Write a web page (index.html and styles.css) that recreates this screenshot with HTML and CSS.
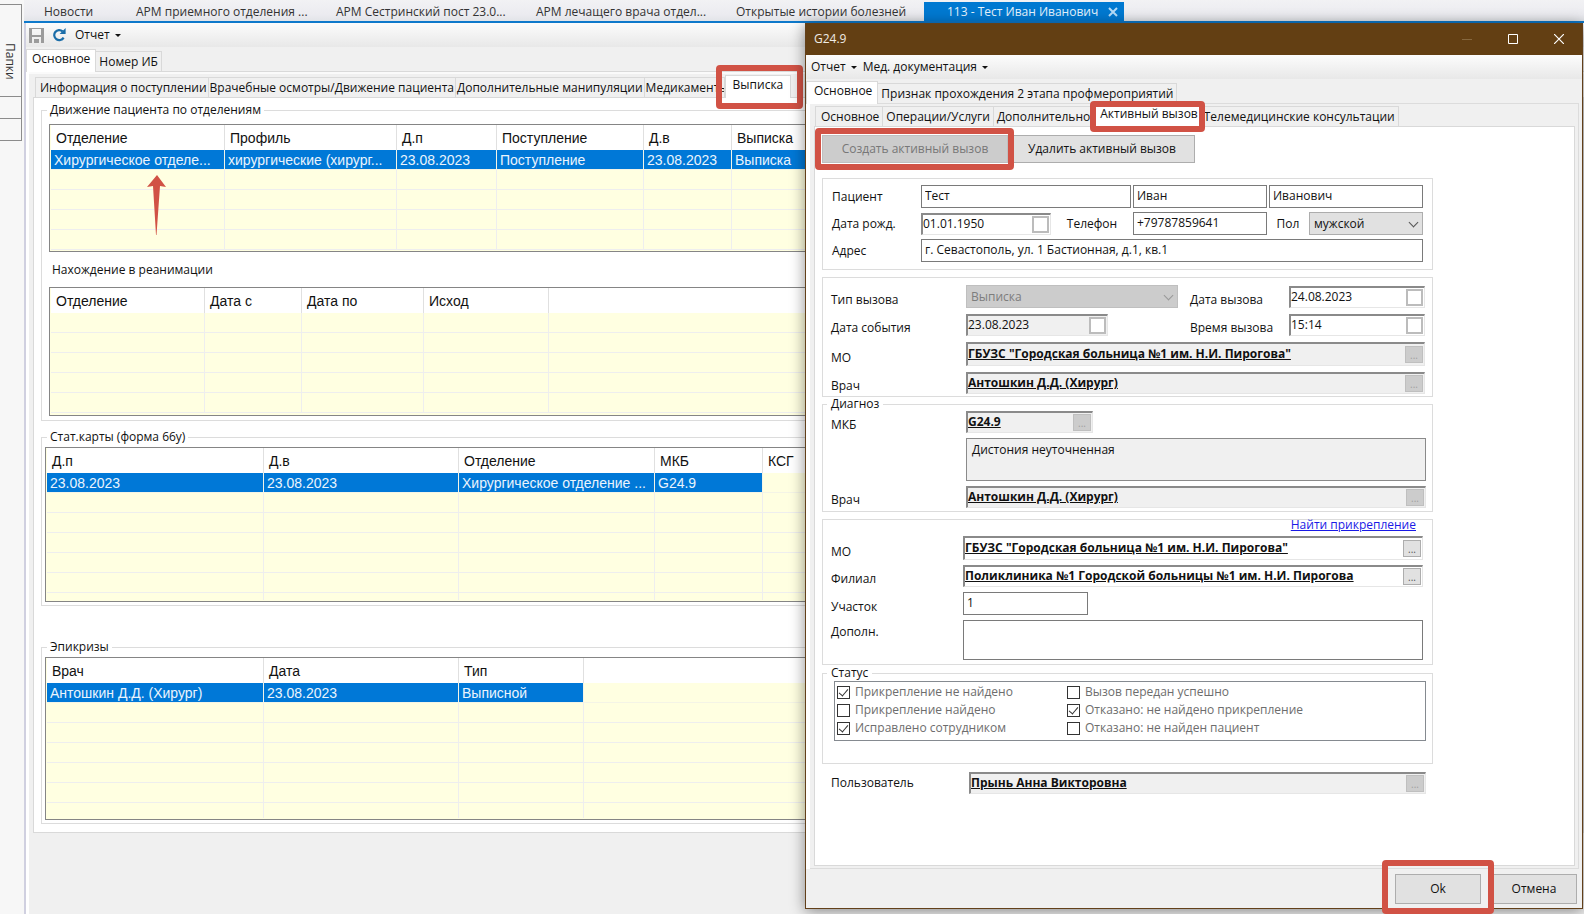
FILE: index.html
```html
<!DOCTYPE html>
<html lang="ru">
<head>
<meta charset="utf-8">
<title>113 - Тест Иван Иванович</title>
<link rel="stylesheet" href="styles.css">
</head>
<body>
<div class="app">
  <aside class="dock">
    <div class="dock-box">
      <button class="dock-folders" type="button">Папки</button>
      <div class="dock-slot"></div>
      <div class="dock-slot"></div>
    </div>
  </aside>

  <div class="workspace">
    <nav class="doc-tabs">
      <button type="button" class="doc-tab doc-tab-short">Новости</button>
      <button type="button" class="doc-tab">АРМ приемного отделения ...</button>
      <button type="button" class="doc-tab">АРМ Сестринский пост 23.0...</button>
      <button type="button" class="doc-tab">АРМ лечащего врача отдел...</button>
      <button type="button" class="doc-tab">Открытые истории болезней</button>
      <button type="button" class="doc-tab doc-tab-active">113 - Тест Иван Иванович
        <svg width="10" height="10" viewBox="0 0 10 10"><path d="M1 1l8 8M9 1l-8 8" stroke="#b5dcf8" stroke-width="2"/></svg>
      </button>
    </nav>

    <div class="toolbar">
      <button type="button" class="tool" aria-label="Сохранить">
        <svg width="15" height="15" viewBox="0 0 15 15"><path fill="#9b9b9b" fill-rule="evenodd" d="M0 0h15v15h-15zM3 1v6h9v-6zM3 9v6h2v-4h5v4h2v-6z"/><path fill="#9b9b9b" d="M6 11h2v3h-2z"/></svg>
      </button>
      <button type="button" class="tool" aria-label="Обновить">
        <svg width="13" height="14" viewBox="0 0 13 14"><path d="M10.6 9.6A5 5 0 1 1 9.6 3.4" fill="none" stroke="#1b6da8" stroke-width="2.2"/><path d="M12.6 0v6h-6z" fill="#1b6da8"/></svg>
      </button>
      <button type="button" class="menu">Отчет<span class="caret"></span></button>
    </div>

    <div class="tabs tabs-outer">
      <button type="button" class="tab tab-active">Основное</button>
      <button type="button" class="tab">Номер ИБ</button>
    </div>
    <div class="outer-page">
      <div class="tabs tabs-inner">
        <button type="button" class="tab">Информация о поступлении</button>
        <button type="button" class="tab">Врачебные осмотры/Движение пациента</button>
        <button type="button" class="tab">Дополнительные манипуляции</button>
        <button type="button" class="tab tab-cut">Медикаменты</button>
        <button type="button" class="tab tab-active marked mark-tab">Выписка</button>
      </div>
      <main class="card">
        <fieldset class="group group-moves">
          <legend>Движение пациента по отделениям</legend>
          <div class="grid grid-moves">
            <table>
              <colgroup><col><col><col><col><col><col></colgroup>
              <thead><tr><th>Отделение</th><th>Профиль</th><th>Д.п</th><th>Поступление</th><th>Д.в</th><th>Выписка</th></tr></thead>
              <tbody>
                <tr class="selected"><td>Хирургическое отделе...</td><td>хирургические (хирург...</td><td>23.08.2023</td><td>Поступление</td><td>23.08.2023</td><td>Выписка</td></tr>
                <tr><td></td><td></td><td></td><td></td><td></td><td></td></tr>
                <tr><td></td><td></td><td></td><td></td><td></td><td></td></tr>
                <tr><td></td><td></td><td></td><td></td><td></td><td></td></tr>
                <tr><td></td><td></td><td></td><td></td><td></td><td></td></tr>
              </tbody>
            </table>
            <svg class="arrow" width="20" height="60" viewBox="0 0 20 60"><path d="M10 0L19 12L13 11L9.500 60L9 60L6 11L0 12z" fill="#d15245"/></svg>
          </div>
          <p class="caption">Нахождение в реанимации</p>
          <div class="grid grid-icu">
            <table>
              <colgroup><col><col><col><col><col></colgroup>
              <thead><tr><th>Отделение</th><th>Дата с</th><th>Дата по</th><th>Исход</th><th></th></tr></thead>
              <tbody>
                <tr><td></td><td></td><td></td><td></td><td></td></tr>
                <tr><td></td><td></td><td></td><td></td><td></td></tr>
                <tr><td></td><td></td><td></td><td></td><td></td></tr>
                <tr><td></td><td></td><td></td><td></td><td></td></tr>
                <tr><td></td><td></td><td></td><td></td><td></td></tr>
              </tbody>
            </table>
          </div>
        </fieldset>

        <fieldset class="group group-stat">
          <legend>Стат.карты (форма 66у)</legend>
          <div class="grid grid-stat">
            <table>
              <colgroup><col><col><col><col><col></colgroup>
              <thead><tr><th>Д.п</th><th>Д.в</th><th>Отделение</th><th>МКБ</th><th>КСГ</th></tr></thead>
              <tbody>
                <tr class="selected"><td>23.08.2023</td><td>23.08.2023</td><td>Хирургическое отделение ...</td><td>G24.9</td><td class="blank"></td></tr>
                <tr><td></td><td></td><td></td><td></td><td></td></tr>
                <tr><td></td><td></td><td></td><td></td><td></td></tr>
                <tr><td></td><td></td><td></td><td></td><td></td></tr>
                <tr><td></td><td></td><td></td><td></td><td></td></tr>
                <tr><td></td><td></td><td></td><td></td><td></td></tr>
                <tr class="part-sm"><td></td><td></td><td></td><td></td><td></td></tr>
              </tbody>
            </table>
          </div>
        </fieldset>

        <fieldset class="group group-epic">
          <legend>Эпикризы</legend>
          <div class="grid grid-epic">
            <table>
              <colgroup><col><col><col><col></colgroup>
              <thead><tr><th>Врач</th><th>Дата</th><th>Тип</th><th></th></tr></thead>
              <tbody>
                <tr class="selected"><td>Антошкин Д.Д. (Хирург)</td><td>23.08.2023</td><td>Выписной</td><td class="blank"></td></tr>
                <tr><td></td><td></td><td></td><td></td></tr>
                <tr><td></td><td></td><td></td><td></td></tr>
                <tr><td></td><td></td><td></td><td></td></tr>
                <tr><td></td><td></td><td></td><td></td></tr>
                <tr><td></td><td></td><td></td><td></td></tr>
                <tr class="part-lg"><td></td><td></td><td></td><td></td></tr>
              </tbody>
            </table>
          </div>
        </fieldset>
      </main>
    </div>
  </div>

  <section class="dialog" role="dialog" aria-labelledby="dlg-title">
    <header class="titlebar">
      <h1 id="dlg-title">G24.9</h1>
      <button type="button" class="winbtn" aria-label="Свернуть"><svg width="10" height="10" viewBox="0 0 10 10"><path d="M0 5.500h10" stroke="#86683f"/></svg></button>
      <button type="button" class="winbtn" aria-label="Развернуть"><svg width="10" height="10" viewBox="0 0 10 10"><path d="M.5.5h9v9h-9z" fill="none" stroke="#fff"/></svg></button>
      <button type="button" class="winbtn" aria-label="Закрыть"><svg width="10" height="10" viewBox="0 0 10 10"><path d="M0 0l10 10M10 0l-10 10" stroke="#fff" stroke-width="1.200"/></svg></button>
    </header>
    <div class="menubar">
      <button type="button" class="menu">Отчет<span class="caret"></span></button>
      <button type="button" class="menu">Мед. документация<span class="caret"></span></button>
    </div>
    <div class="tabs tabs-outer tabs-dialog">
      <button type="button" class="tab tab-active">Основное</button>
      <button type="button" class="tab">Признак прохождения 2 этапа профмероприятий</button>
    </div>
    <div class="dialog-page">
      <div class="tabs tabs-call">
        <button type="button" class="tab">Основное</button>
        <button type="button" class="tab">Операции/Услуги</button>
        <button type="button" class="tab">Дополнительно</button>
        <button type="button" class="tab tab-active marked mark-call">Активный вызов</button>
        <button type="button" class="tab">Телемедицинские консультации</button>
      </div>
      <form class="sheet">
        <div class="actions">
          <span class="marked mark-create"><button type="button" class="btn" disabled>Создать активный вызов</button></span>
          <button type="button" class="btn">Удалить активный вызов</button>
        </div>

        <div class="panel patient">
          <label for="p-last">Пациент</label>
          <div class="names">
            <input class="text" id="p-last" value="Тест">
            <input class="text" aria-label="Имя" value="Иван">
            <input class="text" aria-label="Отчество" value="Иванович">
          </div>
          <label for="p-birth">Дата рожд.</label>
          <div class="birth-row">
            <div class="pick"><input id="p-birth" value="01.01.1950"><button type="button" class="cal" aria-label="Календарь"></button></div>
            <label for="p-phone">Телефон</label>
            <input class="text" id="p-phone" value="+79787859641">
            <label for="p-sex">Пол</label>
            <div class="drop"><select id="p-sex"><option>мужской</option></select></div>
          </div>
          <label for="p-addr">Адрес</label>
          <input class="text" id="p-addr" value="г. Севастополь, ул. 1 Бастионная, д.1, кв.1">
        </div>

        <div class="panel form call">
          <label for="c-type">Тип вызова</label>
          <div class="pair">
            <div class="drop drop-off"><select id="c-type" disabled><option>Выписка</option></select></div>
            <label for="c-date">Дата вызова</label>
            <div class="pick"><input id="c-date" value="24.08.2023"><button type="button" class="cal" aria-label="Календарь"></button></div>
          </div>
          <label for="c-event">Дата события</label>
          <div class="pair">
            <div class="pick pick-off pick-date"><input id="c-event" value="23.08.2023" readonly><button type="button" class="cal" aria-label="Календарь"></button></div>
            <label for="c-time">Время вызова</label>
            <div class="pick"><input id="c-time" value="15:14"><button type="button" class="cal" aria-label="Время"></button></div>
          </div>
          <label for="c-mo">МО</label>
          <div class="pick pick-off pick-tall ref"><input id="c-mo" value='ГБУЗС "Городская больница №1 им. Н.И. Пирогова"' readonly><button type="button" class="more" disabled>...</button></div>
          <label for="c-doc">Врач</label>
          <div class="pick pick-off ref"><input id="c-doc" value="Антошкин Д.Д. (Хирург)" readonly><button type="button" class="more" disabled>...</button></div>
        </div>

        <fieldset class="panel diag">
          <legend>Диагноз</legend>
          <div class="fields">
            <label for="d-mkb">МКБ</label>
            <div class="pick pick-off pick-code ref"><input id="d-mkb" value="G24.9" readonly><button type="button" class="more" disabled>...</button></div>
            <textarea class="text area area-off" aria-label="Расшифровка диагноза" readonly>Дистония неуточненная</textarea>
            <label for="d-doc">Врач</label>
            <div class="pick pick-off ref"><input id="d-doc" value="Антошкин Д.Д. (Хирург)" readonly><button type="button" class="more" disabled>...</button></div>
          </div>
        </fieldset>

        <div class="panel form attach">
          <a class="find" href="#">Найти прикрепление</a>
          <label for="a-mo">МО</label>
          <div class="pick pick-tall ref"><input id="a-mo" value='ГБУЗС "Городская больница №1 им. Н.И. Пирогова"'><button type="button" class="more">...</button></div>
          <label for="a-fil">Филиал</label>
          <div class="pick ref"><input id="a-fil" value="Поликлиника №1 Городской больницы №1 им. Н.И. Пирогова"><button type="button" class="more">...</button></div>
          <label for="a-uch">Участок</label>
          <input class="text text-short" id="a-uch" value="1">
          <label for="a-dop">Дополн.</label>
          <textarea class="text area" id="a-dop"></textarea>
        </div>

        <fieldset class="panel status">
          <legend>Статус</legend>
          <div class="checks">
            <label><input type="checkbox" checked disabled>Прикрепление не найдено</label>
            <label><input type="checkbox" disabled>Вызов передан успешно</label>
            <label><input type="checkbox" disabled>Прикрепление найдено</label>
            <label><input type="checkbox" checked disabled>Отказано: не найдено прикрепление</label>
            <label><input type="checkbox" checked disabled>Исправлено сотрудником</label>
            <label><input type="checkbox" disabled>Отказано: не найден пациент</label>
          </div>
        </fieldset>

        <div class="user">
          <label for="u-name">Пользователь</label>
          <div class="pick pick-off ref"><input id="u-name" value="Прынь Анна Викторовна" readonly><button type="button" class="more" disabled>...</button></div>
        </div>
      </form>
    </div>
    <footer class="footer">
      <span class="marked mark-ok"><button type="button" class="btn">Ok</button></span>
      <button type="button" class="btn">Отмена</button>
    </footer>
  </section>
</div>
</body>
</html>
```
FILE: styles.css
```css
* { box-sizing: border-box; }

body, button, input, select, textarea {
  font: 12px/16px "Open Sans", "Noto Sans", sans-serif;
  color: #111;
}

body { margin: 0; background: #f0f0f0; }

button { margin: 0; padding: 0; border: 0; background: none; white-space: nowrap; }
input, textarea, select { margin: 0; min-width: 0; }
fieldset { margin: 0; padding: 0; min-width: 0; }
svg { display: block; }

.app {
  position: relative;
  display: flex;
  height: 100vh;
  overflow: hidden;
}

/* left dock */
.dock { flex: none; width: 24px; padding-top: 4px; background: #f7f7f7; }
.dock-box { width: 22px; border: solid #8c8c8c; border-width: 1px 1px 0 0; }
.dock-folders {
  display: block;
  width: 20px;
  height: 91px;
  padding-top: 38px;
  writing-mode: vertical-rl;
  color: #333;
  text-align: start;
}
.dock-slot { height: 22px; border-top: 1px solid #8c8c8c; }
.dock-slot:last-child { height: 23px; border-bottom: 1px solid #8c8c8c; }

/* workspace */
.workspace {
  flex: 1;
  min-width: 0;
  border-left: 2px solid #d0d0e0;
}
.doc-tabs {
  display: flex;
  align-items: flex-end;
  height: 23px;
  margin-left: -2px;
  padding-left: 8px;
  border-bottom: 2px solid #0e79cb;
  background: linear-gradient(#f2f2f4, #ebebf0 70%, #e2e4e8);
}
.doc-tab { flex: 0 1 200px; height: 19px; padding: 0 12px; text-align: left; color: #333; }
.doc-tab-short { flex-basis: 92px; }
.doc-tab-active {
  display: flex;
  align-items: center;
  justify-content: space-between;
  padding: 0 6px 0 23px;
  background: #0079d1;
  color: #e6f3fc;
}

.toolbar, .menubar {
  display: flex;
  align-items: center;
  height: 24px;
  gap: 9px;
  background: linear-gradient(#fcfcfc, #e8e8e8);
}
.toolbar { padding-left: 3px; }
.menubar { gap: 6px; padding-left: 5px; }
.menu { display: flex; align-items: center; gap: 5px; }
.caret { border: solid transparent; border-width: 3px 3px 0; border-top-color: #111; }

/* tab strips */
.tabs { display: flex; align-items: flex-end; }
.tabs-outer { height: 24px; }
.tab {
  height: 20px;
  padding: 0 3px;
  border: solid #d9d9d9;
  border-width: 1px 1px 0 0;
  background: #f0f0f0;
}
.tab:first-child { border-left-width: 1px; }
.tab-active {
  position: relative;
  z-index: 1;
  height: 23px;
  margin-bottom: -1px;
  padding: 0 5px 4px;
  border: 1px solid #d9d9d9;
  border-bottom: 0;
  background: #fff;
}
.tabs-inner .tab { padding: 0 1px; }
.tabs-inner .tab-active { padding: 0 7px 4px; }
.tabs-inner .tab:first-child { padding-left: 4px; }
.tabs-inner .tab-cut { width: 80px; overflow: hidden; text-align: left; }

.outer-page {
  margin-left: 3px;
  padding: 3px 0 0 4px;
  border-top: 1px solid #d9d9d9;
  box-shadow: inset 0 2px #fafafa, -3px 0 #fff;
  height: calc(100vh - 71px);
}
.outer-page > .tabs { padding-left: 2px; }
.card {
  padding: 4px 0 8px 7px;
  border: 1px solid #d9d9d9;
  background: #fff;
}

.group { border: 1px solid #dcdcdc; }
.group legend { height: 16px; margin-left: 5px; padding: 0 3px; }
.group-moves { padding: 6px 0 4px; }
.group-moves .grid { margin: 0 7px; }
.group-stat { margin-top: 8px; padding: 2px 0 3px; }
.group-epic { margin-top: 33px; padding: 2px 0 3px; }
.group-stat .grid, .group-epic .grid { margin: 0 3px; }
.caption { margin: 0; padding: 10px 10px 9px; }

/* data grids */
.grid {
  position: relative;
  padding: 0 0 1px 1px;
  border: 1px solid #858585;
  background: #ffffe1;
}
.grid table {
  width: 100%;
  table-layout: fixed;
  border-collapse: separate;
  border-spacing: 0;
  font: 14px/18px "Liberation Sans", Arial, sans-serif;
}
.grid th {
  height: 25px;
  padding: 0 5px;
  border-right: 1px solid #e0e0e0;
  background: #fff;
  font-weight: normal;
  text-align: left;
}
.grid td {
  height: 20px;
  padding: 0 3px;
  border: solid #eeeeee;
  border-width: 0 1px 1px 0;
  white-space: nowrap;
  overflow: hidden;
}
.grid .selected td {
  border-color: #f4f4e6;
  background: #0078d7;
  background-clip: padding-box;
  color: #eaf4fd;
}
.grid .selected .blank { background: none; }
.grid .part-sm td { height: 7px; border-bottom: 0; }
.grid .part-lg td { height: 15px; border-bottom: 0; }

.grid-icu { padding-bottom: 2px; }

.grid-moves col:nth-child(1) { width: 174px; }
.grid-moves col:nth-child(2) { width: 172px; }
.grid-moves col:nth-child(3) { width: 100px; }
.grid-moves col:nth-child(4) { width: 147px; }
.grid-moves col:nth-child(5) { width: 88px; }
.grid-icu col:nth-child(1) { width: 154px; }
.grid-icu col:nth-child(2) { width: 97px; }
.grid-icu col:nth-child(3) { width: 122px; }
.grid-icu col:nth-child(4) { width: 125px; }
.grid-stat col:nth-child(1), .grid-epic col:nth-child(1) { width: 217px; }
.grid-stat col:nth-child(2), .grid-epic col:nth-child(2) { width: 195px; }
.grid-stat col:nth-child(3) { width: 196px; }
.grid-stat col:nth-child(4) { width: 108px; }
.grid-epic col:nth-child(3) { width: 125px; }

/* highlight marks */
.marked { position: relative; }
.marked::after {
  content: "";
  position: absolute;
  z-index: 2;
  border: 6px solid #d15245;
  border-radius: 4px;
  pointer-events: none;
}
.mark-tab::after { inset: -11px -13px -11px -10px; }
.tabs-call .mark-call { padding: 0 2px 4px 5px; }
.mark-call::after { inset: -4px -5px -5px; }
.mark-create::after { inset: -7px -6px -7px -7px; }
.mark-ok::after { inset: -14px -13px -10px; }
.arrow { position: absolute; left: 97px; top: 50px; }

/* dialog window */
.dialog {
  position: absolute;
  z-index: 3;
  top: 23px;
  right: 1px;
  bottom: 5px;
  left: 805px;
  display: flex;
  flex-direction: column;
  border: 1px solid #63401a;
  background: #f0f0f0;
  box-shadow: 0 2px 14px rgba(0, 0, 0, .45);
}
.titlebar {
  display: flex;
  align-items: center;
  height: 31px;
  padding: 0 0 1px 8px;
  background: #633f13;
}
.titlebar h1 { flex: 1; margin: 0; font: inherit; color: #f0ebe4; }
.winbtn { display: grid; place-items: center; width: 46px; height: 30px; }
.tabs-dialog .tab { padding: 0 3px; }
.tabs-dialog .tab-active { padding: 0 5px 4px 7px; }
.dialog-page {
  flex: 1;
  display: flex;
  flex-direction: column;
  min-height: 0;
  margin: 0 3px 0 4px;
  padding: 0 3px 2px 4px;
  border: 1px solid #dcdcdc;
  border-left: 0;
  box-shadow: -4px 0 #fff;
}
.tabs-call { padding-left: 1px; }
.tabs-call .tab:first-child { padding-left: 5px; }
.sheet {
  flex: 1;
  padding: 8px 8px 0 7px;
  border: 1px solid #d9d9d9;
  background: #fff;
}

.btn {
  width: 186px;
  height: 28px;
  border: 1px solid #adadad;
  background: #e1e1e1;
}
.btn:disabled { border-color: #bfbfbf; background: #ccc; color: #777; }
.actions { display: flex; gap: 1px; }
.actions .marked { display: flex; }

.panel { max-width: 611px; border: 1px solid #dcdcdc; }
.panel legend { height: 14px; margin-left: 4px; padding: 0 4px; line-height: 14px; }

.patient {
  display: grid;
  grid-template-columns: 89px 1fr;
  align-items: center;
  gap: 4px 0;
  margin-top: 15px;
  padding: 6px 9px 7px;
}
.names { display: grid; grid-template-columns: 210fr 134fr 154fr; gap: 2px; }
.birth-row {
  display: grid;
  grid-template-columns: 130px 82px 134px 42px 1fr;
  align-items: center;
}
.birth-row label { justify-self: center; }

.form, .fields {
  display: grid;
  grid-template-columns: 135px 1fr;
  align-items: end;
}
.call { gap: 6px 0; margin-top: 7px; padding: 7px 7px 2px 8px; }
.pair {
  display: grid;
  grid-template-columns: 212px 1fr 136px;
  align-items: end;
}
.pair label { padding-left: 12px; }

.fields { gap: 5px 0; padding: 0 6px 3px 8px; }
.fields .area { grid-column: 2; height: 43px; }
.attach {
  grid-template-columns: 132px 1fr;
  gap: 5px 0;
  margin-top: 7px;
  padding: 0 9px 4px 8px;
}
.find { grid-column: 2; justify-self: end; padding-right: 7px; height: 11px; line-height: 10px; color: #1a1ae6; }
.attach .area { height: 40px; }
.attach label[for="a-dop"] { align-self: start; padding-top: 4px; }

/* inputs */
.text {
  width: 100%;
  height: 23px;
  padding: 0 3px 2px;
  border: 1px solid #7a7a7a;
  border-radius: 0;
  background: #fff;
}
.text-short { width: 125px; }
.area { display: block; padding: 3px 5px; resize: none; }
.area-off { border-color: #8a8a8a; background: #f0f0f0; }

.pick {
  display: flex;
  align-items: center;
  height: 22px;
  padding-right: 1px;
  border: solid #e6e6e6;
  border-width: 2px 1px 1px 2px;
  border-top-color: #8a8a8a;
  border-left-color: #8a8a8a;
  background: #fff;
}
.pick input {
  flex: 1;
  width: 100%;
  height: 100%;
  padding: 0 0 2px;
  border: 0;
  background: none;
}
.pick-off { background: #f0f0f0; }
.pick-tall { height: 24px; }
.pick-date { width: 142px; }
.pick-code { width: 127px; }
.ref input { font-weight: bold; text-decoration: underline; }
.cal { flex: none; width: 17px; height: 17px; border: 2px solid #bcbcbc; background: #fff; }
.more {
  flex: none;
  width: 18px;
  height: 17px;
  border: 1px solid #adadad;
  background: #e1e1e1;
  font-size: 10px;
  line-height: 12px;
  color: #555;
}
.more:disabled { border-color: #bfbfbf; background: #ccc; color: #a0a0a0; }

.drop { position: relative; height: 23px; }
.drop select {
  width: 100%;
  height: 100%;
  padding: 0 4px;
  border: 1px solid #adadad;
  border-radius: 0;
  background: #e1e1e1;
  appearance: none;
}
.drop::after {
  content: "";
  position: absolute;
  top: 7px;
  right: 6px;
  width: 6px;
  height: 6px;
  border: solid #555;
  border-width: 0 1px 1px 0;
  transform: rotate(45deg);
}
.drop-off select { border-color: #bfbfbf; background: #ccc; color: #7d7d7d; opacity: 1; }
.drop-off::after { border-color: #999; }

/* status */
.status { margin-top: 1px; padding: 1px 0 22px; }
.checks {
  display: grid;
  grid-template-columns: 230px 1fr;
  margin: 0 6px 0 11px;
  padding: 1px 2px 3px;
  border: 1px solid #858a90;
}
.checks label { display: flex; align-items: center; gap: 5px; height: 18px; color: #6d6d6d; }
.checks input {
  width: 13px;
  height: 13px;
  border: 1px solid #333;
  background: #fff;
  appearance: none;
  display: grid;
  place-items: center;
}
.checks input:checked::after {
  content: "";
  width: 4px;
  height: 8px;
  border: solid #333;
  border-width: 0 1px 1px 0;
  transform: translateY(-1px) rotate(40deg);
}

.user {
  display: grid;
  grid-template-columns: 138px 1fr;
  align-items: center;
  max-width: 604px;
  margin-top: 8px;
  padding-left: 9px;
}

.footer {
  display: flex;
  justify-content: flex-end;
  gap: 10px;
  padding: 5px 5px 4px;
}
.footer .marked { display: flex; }
.footer .btn { width: 86px; height: 30px; }
```
